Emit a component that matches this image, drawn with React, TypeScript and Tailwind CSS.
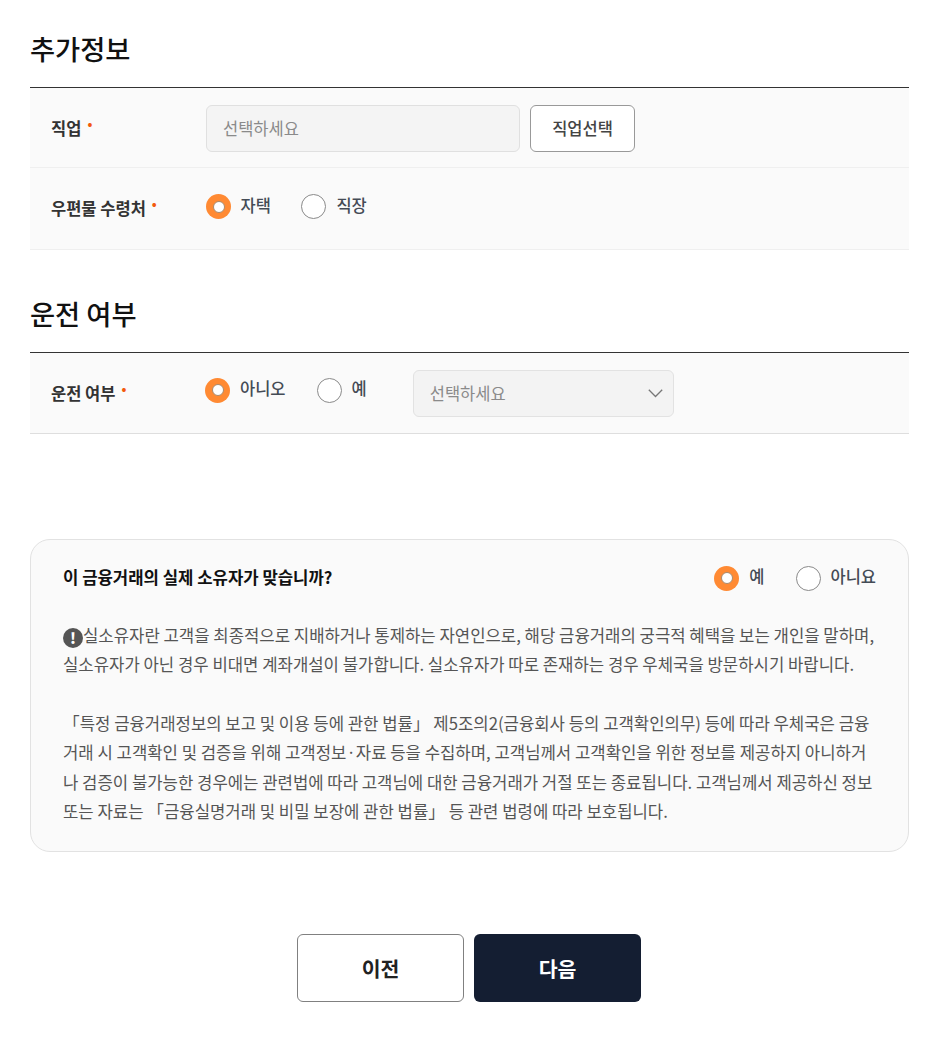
import React from "react";

const Star = () => <span className="ml-[6px] relative top-[-5px] text-[#f2590d] text-[13px] font-bold leading-none">•</span>;

function Radio({ on, label, gap = "gap-[9.5px]" }: { on?: boolean; label: string; gap?: string }) {
  return (
    <div className={`flex items-center ${gap}`}>
      <span className={on ? "w-[25px] h-[25px] rounded-full bg-[#ff8a33] flex items-center justify-center" : "w-[25px] h-[25px] rounded-full border-[1.5px] border-[#8a8a8a] bg-white"}>
        {on && <span className="w-[12px] h-[12px] rounded-full bg-white border-[1.5px] border-[#a98a6c]" />}
      </span>
      <span className="text-[16.5px] leading-[22px] text-[#444b55] font-medium relative top-[-2px]">{label}</span>
    </div>
  );
}

export default function App() {
  return (
    <div className="w-[940px] h-[1047px] bg-white pl-[30px] pr-[31px] overflow-hidden font-['Noto_Sans_CJK_KR','Noto_Sans',sans-serif] text-[#333]">
      <h2 className="pt-[29px] h-[87px] text-[27.3px] leading-[38px] font-medium text-[#111]">추가정보</h2>
      <div className="border-t-[1.5px] border-[#333]">
        <div className="h-[80px] pt-[1px] bg-[#fafafa] border-b border-[#efefef] flex items-center">
          <div className="w-[176px] pl-[21px] text-[16.5px] font-bold text-[#333] flex items-center">직업<Star /></div>
          <div className="w-[314px] h-[47px] rounded-[6px] bg-[#f4f4f4] border-[1.5px] border-[#e0e0e0] flex items-center pl-[16px] text-[16.5px] text-[#8a8a8a]">선택하세요</div>
          <button className="ml-[10px] w-[105px] h-[47px] rounded-[6px] bg-white border-[1.5px] border-[#999] text-[16.5px] font-medium text-[#444]">직업선택</button>
        </div>
        <div className="h-[82px] bg-[#fafafa] border-b border-[#efefef] flex items-center">
          <div className="w-[176px] pl-[21px] text-[16.5px] font-bold text-[#333] flex items-center">우편물 수령처<Star /></div>
          <div className="flex items-center gap-[30.5px] relative top-[-2px]">
            <Radio on label="자택" />
            <Radio label="직장" gap="gap-[10px]" />
          </div>
        </div>
      </div>

      <h2 className="pt-[44px] h-[102px] text-[27.3px] leading-[38px] font-medium text-[#111]">운전 여부</h2>
      <div className="border-t-[1.5px] border-[#333]">
        <div className="h-[81px] bg-[#fafafa] border-b border-[#dedede] flex items-center">
          <div className="w-[175px] pl-[21px] text-[16.5px] font-bold text-[#333] flex items-center">운전 여부<Star /></div>
          <div className="flex items-center gap-[31px] relative top-[-3px]">
            <Radio on label="아니오" gap="gap-[10px]" />
            <Radio label="예" gap="gap-[10px]" />
          </div>
          <div className="ml-[46px] w-[261px] h-[47px] rounded-[6px] bg-[#f3f3f3] border-[1.5px] border-[#e2e2e2] flex items-center justify-between pl-[16px] pr-[10px] text-[16.5px] text-[#8a8a8a]">
            <span>선택하세요</span>
            <svg width="15" height="9" viewBox="0 0 15 9" fill="none" stroke="#777" strokeWidth="1.3"><path d="M.8.8 7.5 7.5 14.2.8" /></svg>
          </div>
        </div>
      </div>

      <div className="mt-[105px] h-[313px] rounded-[20px] border border-[#e2e2e2] bg-[#fafafa] pl-[32px] pr-[32px] pt-[24px]">
        <div className="flex items-center justify-between h-[28px]">
          <span className="text-[16.7px] font-bold text-[#111]">이 금융거래의 실제 소유자가 맞습니까?</span>
          <div className="flex items-center gap-[32px]">
            <Radio on label="예" gap="gap-[10px]" />
            <Radio label="아니요" gap="gap-[9px]" />
          </div>
        </div>
        <div className="mt-[29px] text-[16.7px] leading-[29.4px] text-[#555] whitespace-nowrap">
          <p>
            <span className="inline-flex align-[-2px] w-[20px] h-[20px] rounded-full bg-[#555] text-white items-center justify-center text-[15px] font-black leading-none">!</span>실소유자란 고객을 최종적으로 지배하거나 통제하는 자연인으로, 해당 금융거래의 궁극적 혜택을 보는 개인을 말하며,<br />
            실소유자가 아닌 경우 비대면 계좌개설이 불가합니다. 실소유자가 따로 존재하는 경우 우체국을 방문하시기 바랍니다.
          </p>
          <p className="mt-[29px]">
            「특정 금융거래정보의 보고 및 이용 등에 관한 법률」 제5조의2(금융회사 등의 고객확인의무) 등에 따라 우체국은 금융<br />
            거래 시 고객확인 및 검증을 위해 고객정보·자료 등을 수집하며, 고객님께서 고객확인을 위한 정보를 제공하지 아니하거<br />
            나 검증이 불가능한 경우에는 관련법에 따라 고객님에 대한 금융거래가 거절 또는 종료됩니다. 고객님께서 제공하신 정보<br />
            또는 자료는 「금융실명거래 및 비밀 보장에 관한 법률」 등 관련 법령에 따라 보호됩니다.
          </p>
        </div>
      </div>

      <div className="mt-[82px] flex gap-[10px] pl-[267px]">
        <button className="w-[167px] h-[68px] rounded-[6px] bg-white border-[1.5px] border-[#808080] text-[20.5px] font-bold text-[#222]">이전</button>
        <button className="w-[167px] h-[68px] rounded-[6px] bg-[#141e32] text-[20.5px] font-bold text-white">다음</button>
      </div>
    </div>
  );
}
